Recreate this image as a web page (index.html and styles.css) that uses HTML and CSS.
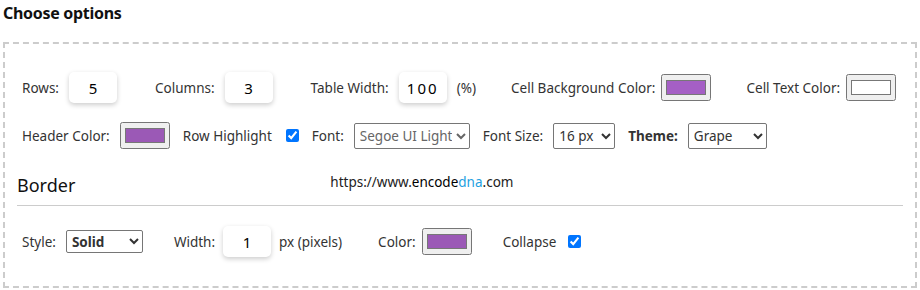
FILE: index.html
```html
<!DOCTYPE html>
<html lang="en">
<head>
    <meta charset="UTF-8">
    <title>Choose options</title>
    <link rel="stylesheet" href="styles.css">
</head>
<body>

    <h3 class="title">Choose options</h3>

    <div class="options">
        <div class="row row-top">
            <div class="field">
                <label>Rows:</label>
                <input type="text" class="num" value="5">
            </div>
            <div class="field">
                <label>Columns:</label>
                <input type="text" class="num" value="3">
            </div>
            <div class="field">
                <label>Table Width:</label>
                <input type="text" class="num wide" value="100">
                <span>(%)</span>
            </div>
            <div class="field tight">
                <label>Cell Background Color:</label>
                <input type="color" value="#a55fc5">
            </div>
            <div class="field tight">
                <label>Cell Text Color:</label>
                <input type="color" value="#ffffff">
            </div>
        </div>

        <div class="row row-mid">
            <div class="field">
                <label>Header Color:</label>
                <input type="color" value="#9b59b6">
            </div>
            <div class="field">
                <label>Row Highlight</label>
                <input type="checkbox" checked>
            </div>
            <div class="field">
                <label>Font:</label>
                <select class="sel-font">
                    <option>Segoe UI Light</option>
                    <option>Arial</option>
                </select>
            </div>
            <div class="field">
                <label>Font Size:</label>
                <select class="sel-size">
                    <option>16 px</option>
                    <option>14 px</option>
                </select>
            </div>
            <div class="field">
                <label class="bold">Theme:</label>
                <select class="sel-theme">
                    <option>Grape</option>
                    <option>Ocean</option>
                </select>
            </div>
        </div>

        <div class="section-head">
            <h4>Border</h4>
            <span class="site">https://www.<b>encode</b><span class="dna">dna</span>.com</span>
        </div>

        <div class="row row-bottom">
            <div class="field">
                <label>Style:</label>
                <select class="sel-style">
                    <option>Solid</option>
                    <option>Dashed</option>
                </select>
            </div>
            <div class="field">
                <label>Width:</label>
                <input type="text" class="num" value="1">
                <span>px (pixels)</span>
            </div>
            <div class="field color-field">
                <label>Color:</label>
                <input type="color" value="#9b59b6">
            </div>
            <div class="field">
                <label>Collapse</label>
                <input type="checkbox" checked>
            </div>
        </div>
    </div>

</body>
</html>
```

FILE: styles.css
```css
body {
    font-family: "Noto Sans", sans-serif;
    font-size: 13.5px;
    color: #333;
    background: #fff;
    margin: 0;
    padding: 0 3px;
}

.title {
    font-size: 16px;
    font-weight: bold;
    color: #111;
    margin: 0;
    padding-top: 2px;
    height: 40px;
    letter-spacing: -0.3px;
}

.options {
    border: 2px dashed #ccc;
    padding: 28px 12px 0 12px;
    height: 214px;
}

.row {
    display: flex;
    align-items: center;
    padding-left: 5px;
}

.field {
    display: flex;
    align-items: center;
    gap: 10px;
    flex-shrink: 0;
    white-space: nowrap;
}

.row-top {
    gap: 38px;
}

.row-top .tight {
    margin-left: -3px;
    gap: 6px;
}

.row-mid {
    gap: 13px;
    margin-top: 19px;
}

.row-bottom {
    gap: 33px;
    margin-top: 20px;
}

.row-bottom .field + .field {
    gap: 8px;
    margin-left: -2px;
}

.row-bottom .color-field.field {
    gap: 6px;
    margin-left: 3px;
}

.bold {
    font-weight: bold;
}

.num {
    width: 48px;
    height: 31px;
    box-sizing: border-box;
    border: none;
    border-radius: 5px;
    box-shadow: 0 2px 5px rgba(0, 0, 0, 0.2);
    text-align: center;
    font-family: inherit;
    font-size: 15px;
    color: #000;
    padding: 0;
}

.wide {
    letter-spacing: 2px;
}

input[type="color"] {
    width: 50px;
    height: 27px;
    margin: 0;
}

input[type="checkbox"] {
    width: 13px;
    height: 13px;
    margin: 0 0 0 4px;
}

select {
    font-family: inherit;
    font-size: 13.5px;
    color: #333;
    height: 26px;
    border: 1px solid #767676;
    border-radius: 2px;
    background: #fff;
    padding: 0 1px;
}

.sel-font {
    width: 116px;
    color: #666;
}

.sel-size {
    width: 62px;
}

.sel-theme {
    width: 79px;
}

.sel-style {
    width: 77px;
    height: 23px;
    font-weight: bold;
}

.section-head {
    display: flex;
    align-items: center;
    margin-top: 24px;
    padding-bottom: 8px;
    border-bottom: 1px solid #ccc;
}

.section-head h4 {
    margin: 0;
    font-size: 18px;
    font-weight: normal;
    color: #111;
}

.site {
    margin-left: 255px;
    margin-top: -6px;
    color: #222;
}

.site b {
    font-weight: normal;
    color: #000;
}

.dna {
    color: #1ea0e0;
}
```
